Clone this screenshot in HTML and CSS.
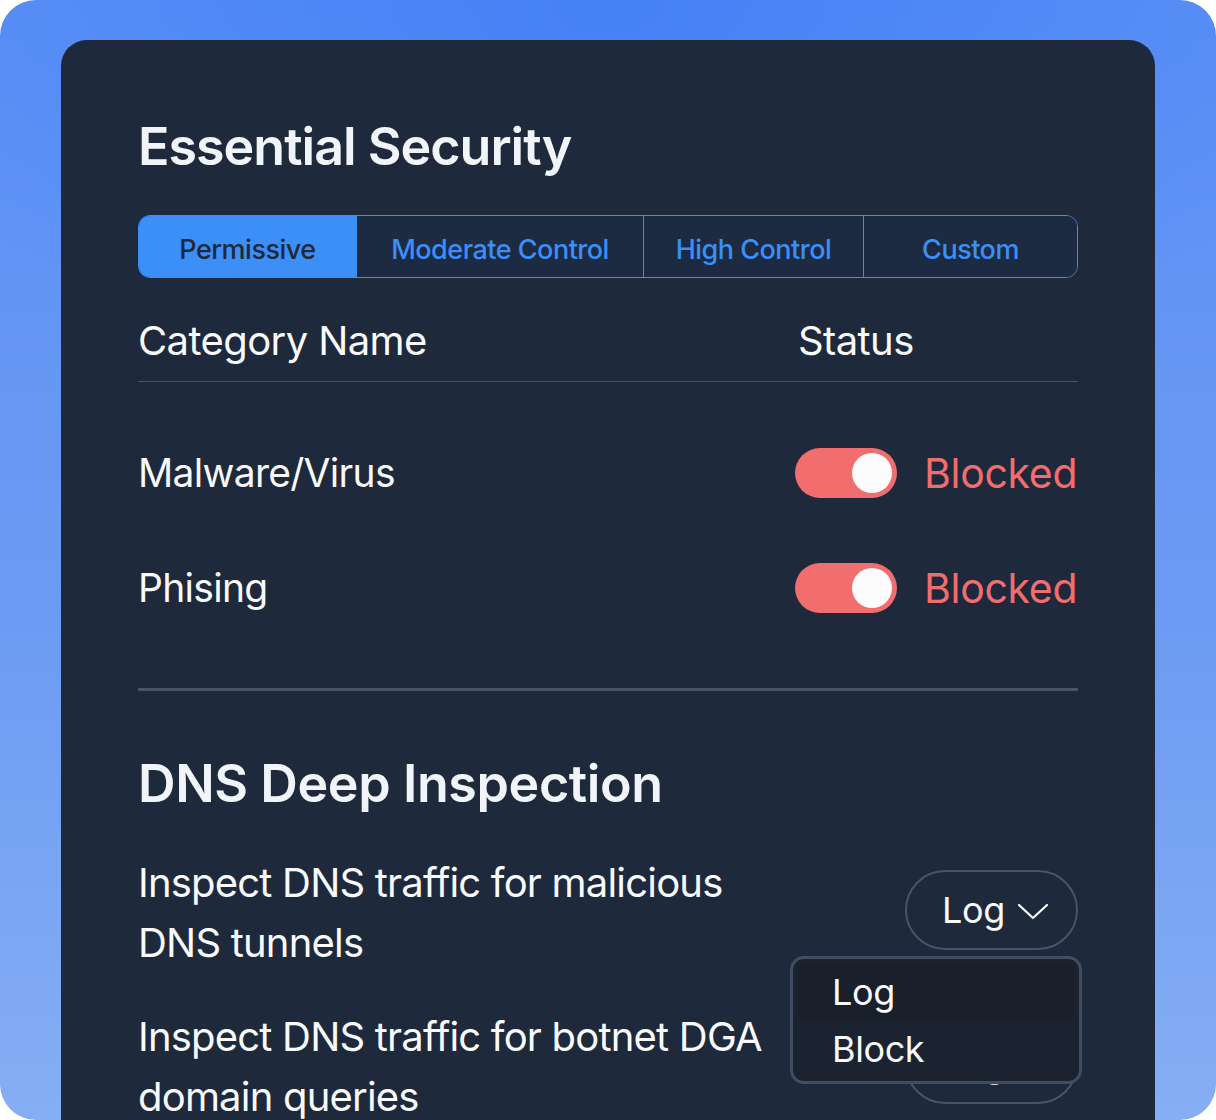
FILE: index.html
```html
<!DOCTYPE html>
<html lang="en">
<head>
  <meta charset="UTF-8">
  <meta name="viewport" content="width=device-width, initial-scale=1.0">
  <title>Essential Security</title>
  <link rel="stylesheet" href="styles.css">
</head>
<body>
  <div class="frame">
    <div class="card">
      <h2 class="title">Essential Security</h2>

      <div class="tabs">
        <div class="tab active">Permissive</div>
        <div class="tab">Moderate Control</div>
        <div class="tab">High Control</div>
        <div class="tab">Custom</div>
      </div>

      <div class="table-head">
        <span class="col-name">Category Name</span>
        <span class="col-status">Status</span>
      </div>

      <div class="rows">
        <div class="row">
          <span class="col-name">Malware/Virus</span>
          <div class="status">
            <span class="toggle on"><span class="knob"></span></span>
            <span class="status-label">Blocked</span>
          </div>
        </div>
        <div class="row">
          <span class="col-name">Phising</span>
          <div class="status">
            <span class="toggle on"><span class="knob"></span></span>
            <span class="status-label">Blocked</span>
          </div>
        </div>
      </div>

      <hr class="divider">

      <h2 class="title dns-title">DNS Deep Inspection</h2>

      <div class="dns-list">
        <div class="dns-row">
          <p class="dns-text">Inspect DNS traffic for malicious DNS tunnels</p>
          <div class="select-wrap">
            <button class="select" type="button">
              Log
              <svg class="chevron" width="32" height="20" viewBox="0 0 32 20" fill="none">
                <path d="M2 4 L16 17 L30 4" stroke="#f8fafc" stroke-width="2.2" stroke-linecap="round" stroke-linejoin="round"/>
              </svg>
            </button>
            <ul class="menu">
              <li class="menu-item selected">Log</li>
              <li class="menu-item">Block</li>
            </ul>
          </div>
        </div>
        <div class="dns-row">
          <p class="dns-text">Inspect DNS traffic for botnet DGA domain queries</p>
          <div class="select-wrap">
            <button class="select" type="button">
              Log
              <svg class="chevron" width="32" height="20" viewBox="0 0 32 20" fill="none">
                <path d="M2 4 L16 17 L30 4" stroke="#f8fafc" stroke-width="2.2" stroke-linecap="round" stroke-linejoin="round"/>
              </svg>
            </button>
          </div>
        </div>
      </div>
    </div>
  </div>
</body>
</html>
```

FILE: styles.css
```css
html, body {
  margin: 0;
  padding: 0;
  background: #ffffff;
}
body {
  font-family: Inter, "Noto Sans", sans-serif;
  color: #f8fafc;
}
.frame {
  width: 1216px;
  height: 1120px;
  box-sizing: border-box;
  padding: 40px 61px 0;
  border-radius: 36px;
  overflow: hidden;
  background:
    radial-gradient(ellipse 60% 40% at 50% 0%, rgba(66, 128, 246, 0.9), rgba(66, 128, 246, 0) 100%),
    linear-gradient(180deg, #5a8ff6 0%, #6c9bf3 55%, #86aef3 100%);
}
.card {
  background: #1e293b;
  border-radius: 26px 26px 0 0;
  padding: 75px 77px 0;
  height: 1200px;
  box-sizing: border-box;
}
.title {
  margin: 0;
  font-size: 52px;
  font-weight: 600;
  letter-spacing: -1px;
  line-height: 64px;
  color: #f1f5f9;
}
.tabs {
  margin-top: 36px;
  display: grid;
  grid-template-columns: 217px 287px 220px 1fr;
  height: 63px;
  box-sizing: border-box;
  border: 1.5px solid #3b8ef6;
  border-radius: 12px;
  overflow: hidden;
}
.tab {
  display: flex;
  align-items: center;
  justify-content: center;
  padding-top: 6px;
  font-size: 27px;
  font-weight: 500;
  letter-spacing: -0.5px;
  color: #3b8ff7;
  background: #1c2b41;
  border-left: 1.5px solid #3b8ef6;
}
.tab.active {
  background: #3b8ff7;
  color: #1e293b;
  border-left: none;
}
.table-head {
  display: flex;
  align-items: center;
  height: 104px;
  box-sizing: border-box;
  padding-top: 22px;
  border-bottom: 1px solid #475569;
  font-size: 40px;
  letter-spacing: -0.6px;
}
.col-name {
  width: 660px;
}
.rows {
  padding: 33px 0 43px;
}
.row {
  display: flex;
  align-items: center;
  height: 115px;
  font-size: 39px;
  letter-spacing: -0.7px;
}
.status {
  display: flex;
  align-items: center;
  gap: 27px;
  margin-left: -3px;
}
.toggle {
  width: 102px;
  height: 50px;
  border-radius: 25px;
  background: #f26d6d;
  display: flex;
  align-items: center;
  justify-content: flex-end;
  padding: 0 5px;
  box-sizing: border-box;
}
.knob {
  width: 40px;
  height: 40px;
  border-radius: 50%;
  background: #fcfcfd;
}
.status-label {
  color: #f26d6d;
  font-size: 41px;
  letter-spacing: -0.3px;
}
.divider {
  margin: 0;
  border: none;
  height: 3px;
  background: #475569;
}
.dns-title {
  margin-top: 61px;
  letter-spacing: -0.4px;
}
.dns-list {
  margin-top: 37px;
  display: flex;
  flex-direction: column;
  gap: 34px;
}
.dns-row {
  display: flex;
  align-items: flex-start;
  justify-content: space-between;
}
.dns-text {
  margin: 0;
  width: 660px;
  font-size: 40px;
  line-height: 60px;
  letter-spacing: -0.8px;
}
.select-wrap {
  position: relative;
  margin-top: 17px;
}
.select {
  width: 173px;
  height: 80px;
  box-sizing: border-box;
  border: 2px solid #475569;
  border-radius: 40px;
  background: transparent;
  color: #f8fafc;
  font-family: inherit;
  font-size: 36px;
  letter-spacing: -0.4px;
  display: flex;
  align-items: center;
  justify-content: center;
  gap: 12px;
  padding: 0 0 0 8px;
}
.chevron {
  margin-top: 2px;
}
.menu {
  position: absolute;
  top: 86px;
  right: -4px;
  width: 292px;
  box-sizing: border-box;
  margin: 0;
  padding: 4px;
  list-style: none;
  background: #1c2330;
  border: 3px solid #3f4d63;
  border-radius: 14px;
  z-index: 2;
}
.menu-item {
  height: 57px;
  display: flex;
  align-items: center;
  padding-left: 35px;
  font-size: 36px;
  letter-spacing: -0.4px;
  border-radius: 10px;
}
.menu-item.selected {
  background: #19202b;
}
```
